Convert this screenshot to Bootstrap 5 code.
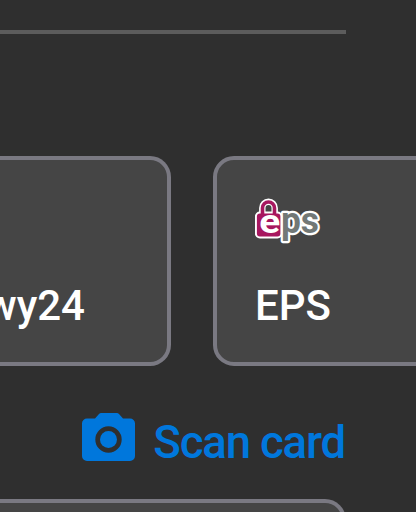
<!DOCTYPE html>
<html lang="en">
<head>
<meta charset="utf-8">
<title>Payment methods</title>
<link href="https://cdn.jsdelivr.net/npm/bootstrap@5.3.0/dist/css/bootstrap.min.css" rel="stylesheet">
<style>
body{background:#2f2f2f;color:#fff;font-family:Roboto,"Liberation Sans",sans-serif;height:512px}
.screen{width:416px;height:512px}
.divider{width:346px;height:4px;background:#5c5c5c;margin-top:30px}
.methods{margin-top:122px;gap:42px}
.method{height:210px;border:4px solid #7a7982;border-radius:21px;background:#454545}
.method-left{width:171px;border-left:0;border-top-left-radius:0;border-bottom-left-radius:0}
.method-right{width:260px;padding-left:38px;padding-top:38px}
.method-name{font-size:42px;line-height:50px;font-weight:500;white-space:nowrap}
.name-left{padding-right:82px;margin-top:121px}
.name-right{margin-top:35px}
.scan{width:346px;height:60px;margin-top:43px;padding-right:1px;color:#0077dc;font-size:45.5px;line-height:60px;font-weight:500}
.scan svg{margin-bottom:4px}
.scan-label{letter-spacing:-1.15px;margin-left:18px;margin-top:7px}
.field{width:346px;height:110px;margin-top:30px;border:4px solid #7a7982;border-left:0;border-radius:0 21px 0 0;background:#454545}
</style>
<script src="https://cdn.jsdelivr.net/npm/bootstrap@5.3.0/dist/js/bootstrap.bundle.min.js"></script>
</head>
<body class="m-0 overflow-hidden">
<main class="screen d-flex flex-column overflow-hidden">
  <div class="divider flex-shrink-0"></div>
  <section class="methods d-flex flex-shrink-0">
    <div class="method method-left flex-shrink-0 overflow-hidden d-flex justify-content-end">
      <div class="method-name name-left">Przelewy24</div>
    </div>
    <div class="method method-right flex-shrink-0">
      <svg class="d-block" width="66" height="48" viewBox="0 0 66 48">
        <path d="M7.300 17V10a6.200 6.200 0 0 1 12.400 0V17" fill="none" stroke="#fff" stroke-width="6.400"/>
        <text x="26" y="35" textLength="38" lengthAdjust="spacingAndGlyphs" fill="#727876" stroke="#fff" stroke-width="4.500" stroke-linejoin="round" paint-order="stroke" font-family="Roboto,sans-serif" font-weight="700" font-size="36">ps</text>
        <rect x=".9" y="14.500" width="25.500" height="25" rx="4" fill="#a7175f" stroke="#fff" stroke-width="2"/>
        <path d="M7.500 17V10a6 6 0 0 1 12 0V17" fill="none" stroke="#a7175f" stroke-width="3.600"/>
        <text x="4.200" y="35" textLength="21" lengthAdjust="spacingAndGlyphs" fill="#fff" font-family="Roboto,sans-serif" font-weight="700" font-size="33">e</text>
      </svg>
      <div class="method-name name-right">EPS</div>
    </div>
  </section>
  <div class="scan d-flex align-items-center justify-content-end flex-shrink-0">
    <svg class="flex-shrink-0" width="53" height="48" viewBox="0 0 53 48" fill="currentColor">
      <path fill-rule="evenodd" d="M19 0h16q1 0 2 1l4 4.500h7a5 5 0 0 1 5 5V43a5 5 0 0 1-5 5H5a5 5 0 0 1-5-5V10.500a5 5 0 0 1 5-5h8L17 1q1-1 2-1ZM26.500 13.300a13.200 13.200 0 1 0 0 26.400a13.200 13.200 0 1 0 0-26.400Z"/>
      <circle cx="26.500" cy="26.500" r="8.500"/>
    </svg>
    <span class="scan-label text-nowrap">Scan card</span>
  </div>
  <div class="field flex-shrink-0"></div>
</main>
</body>
</html>
